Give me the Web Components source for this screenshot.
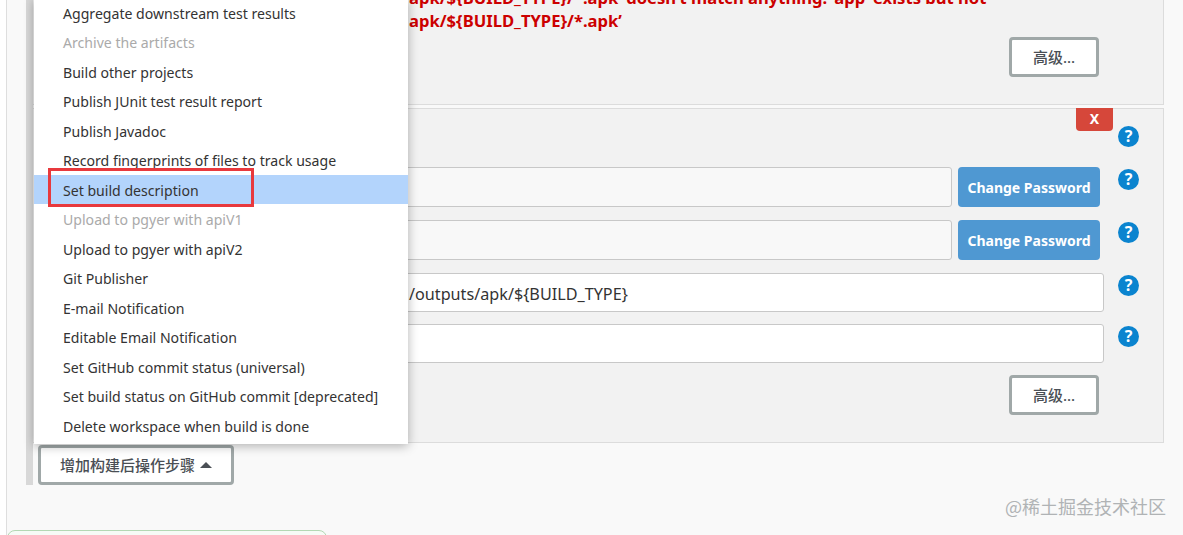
<!DOCTYPE html>
<html>
<head>
<meta charset="utf-8">
<style>
  html, body { margin: 0; height: 100%; overflow: hidden; background: #fff; }
  body { font-family: "Noto Sans", "Noto Sans CJK SC", sans-serif; }
</style>
</head>
<body>
<job-config>
  <job-section slot="sections" style="height:115px;margin-top:-10px">
    <div style="font:700 16.6px/22.5px 'Noto Sans','Noto Sans CJK SC',sans-serif;color:#c00;margin:-4px 0 0 376px;white-space:nowrap">apk/${BUILD_TYPE}/*.apk’ doesn’t match anything: ‘app’ exists but not<br>apk/${BUILD_TYPE}/*.apk’</div>
    <div style="display:flex;justify-content:flex-end;margin:5px 64px 0 0"><flat-button>高级...</flat-button></div>
  </job-section>
  <job-section slot="sections" style="height:335px">
    <del-button></del-button>
    <form-row style="--mt:17px;--h:21px;--hp:0px"><help-dot slot="help"></help-dot></form-row>
    <form-row style="--mt:20px;--h:40px"><text-box slot="field" tone="grey"></text-box><pw-button slot="field">Change Password</pw-button><help-dot slot="help"></help-dot></form-row>
    <form-row style="--mt:13px;--h:40px"><text-box slot="field" tone="grey"></text-box><pw-button slot="field">Change Password</pw-button><help-dot slot="help"></help-dot></form-row>
    <form-row style="--mt:13px;--h:39px"><text-box slot="field" value="/outputs/apk/${BUILD_TYPE}"></text-box><help-dot slot="help"></help-dot></form-row>
    <form-row style="--mt:12px;--h:39px"><text-box slot="field"></text-box><help-dot slot="help"></help-dot></form-row>
    <div style="display:flex;justify-content:flex-end;margin:12px 64px 0 0"><flat-button>高级...</flat-button></div>
  </job-section>
  <flat-button slot="add" wide>增加构建后操作步骤<span style="display:inline-block;width:0;height:0;border:6px solid transparent;border-top:0;border-bottom:6px solid #4a4f55;margin-left:5px;vertical-align:3px"></span></flat-button>
  <post-menu slot="menu">
    <menu-row>Aggregate downstream test results</menu-row>
    <menu-row disabled>Archive the artifacts</menu-row>
    <menu-row>Build other projects</menu-row>
    <menu-row>Publish JUnit test result report</menu-row>
    <menu-row>Publish Javadoc</menu-row>
    <menu-row>Record fingerprints of files to track usage</menu-row>
    <menu-row active>Set build description</menu-row>
    <menu-row disabled>Upload to pgyer with apiV1</menu-row>
    <menu-row>Upload to pgyer with apiV2</menu-row>
    <menu-row>Git Publisher</menu-row>
    <menu-row>E-mail Notification</menu-row>
    <menu-row>Editable Email Notification</menu-row>
    <menu-row>Set GitHub commit status (universal)</menu-row>
    <menu-row>Set build status on GitHub commit [deprecated]</menu-row>
    <menu-row>Delete workspace when build is done</menu-row>
  </post-menu>
</job-config>
<script>
function shadow(el, html) {
  el.attachShadow({ mode: "open" }).innerHTML = html;
}

customElements.define("job-config", class extends HTMLElement {
  constructor() {
    super();
    shadow(this, `
      <style>
        :host { display: block; position: relative; width: 1183px; height: 535px; background: #f9f9f9; overflow: hidden; box-sizing: border-box; }
        .frame { position: absolute; left: 0; top: 0; bottom: 0; width: 6px; background: #fff; border-right: 1px solid #dedede; }
        .rail { margin-left: 26px; width: 1138px; box-sizing: border-box; border-left: 7px solid #d8d8d8; height: 485px; }
        .sections { display: flex; flex-direction: column; gap: 3px; }
        .add { position: absolute; left: 38px; top: 445px; }
        .menu { position: absolute; left: 34px; top: -2px; }
        .mark { position: absolute; left: 48px; top: 168px; width: 206px; height: 39px; box-sizing: border-box; border: 3px solid #e8393d; }
        .tab { position: absolute; left: 7px; top: 530px; width: 320px; height: 10px; background: #f6fbf6; border: 1px solid #b4d8b4; border-radius: 8px 8px 0 0; box-sizing: border-box; }
        .wm { position: absolute; left: 1005px; top: 495px; font: 18px/22px "Noto Sans CJK SC", sans-serif; color: #b0b3b5; white-space: nowrap; }
      </style>
      <div class="frame"></div>
      <div class="rail"><div class="sections"><slot name="sections"></slot></div></div>
      <div class="add"><slot name="add"></slot></div>
      <div class="menu"><slot name="menu"></slot></div>
      <div class="mark"></div>
      <div class="tab"></div>
      <div class="wm">@稀土掘金技术社区</div>`);
  }
});

customElements.define("job-section", class extends HTMLElement {
  constructor() {
    super();
    shadow(this, `
      <style>
        :host { display: flow-root; position: relative; box-sizing: border-box; background: #f2f2f2; border: 1px solid #dcdcdc; border-left: 0; }
      </style>
      <slot></slot>`);
  }
});

customElements.define("form-row", class extends HTMLElement {
  constructor() {
    super();
    shadow(this, `
      <style>
        :host { display: flex; align-items: flex-start; margin-top: var(--mt, 0); padding-left: 360px; height: var(--h, 39px); }
        .field { flex: 1; display: flex; gap: 6px; min-width: 0; height: 100%; }
        .help { width: 59px; flex: none; padding: var(--hp, 2px) 0 0 14px; box-sizing: border-box; }
      </style>
      <div class="field"><slot name="field"></slot></div>
      <div class="help"><slot name="help"></slot></div>`);
  }
});

customElements.define("text-box", class extends HTMLElement {
  static get observedAttributes() { return ["value"]; }
  constructor() {
    super();
    shadow(this, `
      <style>
        :host { display: block; flex: 1; height: 100%; box-sizing: border-box; border: 1px solid #c8c8c8; border-radius: 3px; background: #fff; font: 16.2px/40px "Noto Sans", sans-serif; color: #333; padding-left: 15px; white-space: nowrap; overflow: hidden; }
        :host([tone="grey"]) { background: #f8f8f8; }
      </style>
      <span id="v"></span>`);
  }
  attributeChangedCallback(name, oldValue, newValue) {
    this.shadowRoot.getElementById("v").textContent = newValue;
  }
});

customElements.define("pw-button", class extends HTMLElement {
  constructor() {
    super();
    shadow(this, `
      <style>
        :host { display: block; flex: none; width: 142px; height: 40px; margin-right: 4px; border-radius: 4px; background: #4f98d2; color: #fff; font: 700 14px/42px "Noto Sans", sans-serif; text-align: center; }
      </style>
      <slot></slot>`);
  }
});

customElements.define("flat-button", class extends HTMLElement {
  constructor() {
    super();
    shadow(this, `
      <style>
        :host { display: block; box-sizing: border-box; width: 90px; height: 40px; border: 3px solid #a0a8a8; border-radius: 4px; background: #fff; color: #4a4f55; font: 500 15px/34px "Noto Sans", "Noto Sans CJK SC", sans-serif; text-align: center; white-space: nowrap; }
        :host([wide]) { width: 196px; }
      </style>
      <slot></slot>`);
  }
});

customElements.define("help-dot", class extends HTMLElement {
  constructor() {
    super();
    shadow(this, `
      <style>
        :host { display: block; width: 21px; height: 21px; border-radius: 50%; background: #0b84cf; color: #fff; font: 700 16px/21px "Noto Sans", sans-serif; text-align: center; }
      </style>?`);
  }
});

customElements.define("del-button", class extends HTMLElement {
  constructor() {
    super();
    shadow(this, `
      <style>
        :host { position: absolute; left: 1043px; top: -1px; width: 37px; height: 23px; background: #d6473a; color: #fff; border-radius: 0 0 4px 4px; font: 700 14px/22px "Noto Sans", sans-serif; text-align: center; }
      </style>X`);
  }
});

customElements.define("post-menu", class extends HTMLElement {
  constructor() {
    super();
    shadow(this, `
      <style>
        :host { display: block; width: 374px; height: 446px; box-sizing: border-box; background: #fff; box-shadow: 0 2px 10px rgba(0,0,0,.3); overflow: hidden; }
      </style>
      <slot></slot>`);
  }
});

customElements.define("menu-row", class extends HTMLElement {
  constructor() {
    super();
    shadow(this, `
      <style>
        :host { display: block; height: 29.47px; padding-left: 29px; font: 14.1px/32px "Noto Sans", sans-serif; color: #333; white-space: nowrap; }
        :host([disabled]) { color: #aaa; }
        :host([active]) { background: #b3d4fc; }
      </style>
      <slot></slot>`);
  }
});
</script>
</body>
</html>
